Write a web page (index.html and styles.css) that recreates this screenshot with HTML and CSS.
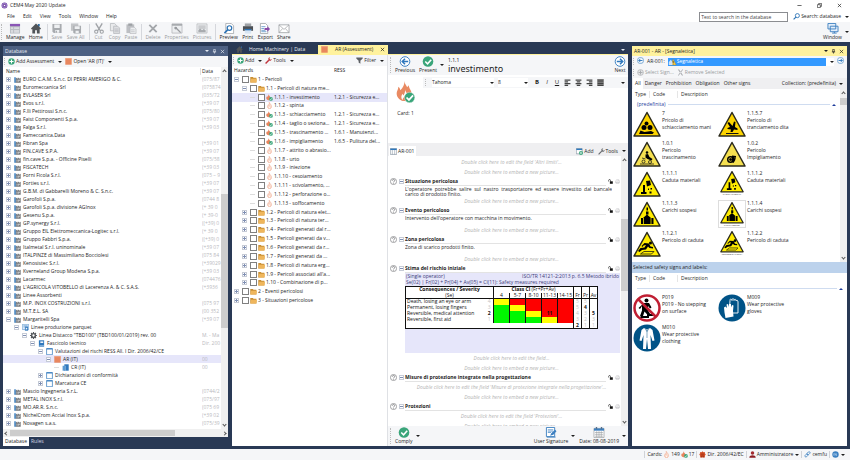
FILE: index.html
```html
<!DOCTYPE html>
<html lang="en">
<head>
    <meta charset="UTF-8">
    <meta name="viewport" content="width=device-width, initial-scale=1.0">
    <title>CEM4 May 2020 Update</title>
    <link rel="stylesheet" href="styles.css">
</head>
<body>
    <!-- Icon set -->
    <svg class="sprite" aria-hidden="true">
        <symbol id="i-app" viewBox="0 0 12 12"><circle cx="6" cy="6" r="5" fill="#6b3fa0"/><circle cx="6" cy="6" r="3.6" fill="none" stroke="#cbb8e6" stroke-width="1"/><circle cx="6" cy="6" r="1.4" fill="#fff"/></symbol>
        <symbol id="i-manage" viewBox="0 0 24 24"><path d="M1 2h22v21H1z" fill="#b9bcc2"/><path d="M1 2h22v5H1z" fill="#8a55b5"/><path d="M3 9h5v4H3zM10 9h11v4H10zM3 15h5v6H3zM10 15h11v6H10z" fill="#d9dbdf"/></symbol>
        <symbol id="i-home" viewBox="0 0 24 24"><path d="M12 1 1 12l2 2 1-1v10h6v-7h4v7h6V13l1 1 2-2-4-4V2h-3v3z" fill="#505458"/><path d="M17 2h3v6l-3-3z" fill="#2a72b5"/></symbol>
        <symbol id="i-save" viewBox="0 0 24 24"><path d="M2 2h20v20H5l-3-3z" fill="#a8abaf"/><path d="M6 3h12v8H6zM8 15h9v6H8z" fill="#eef0f2"/><path d="M9 17h3v4H9z" fill="#a8abaf"/></symbol>
        <symbol id="i-saveall" viewBox="0 0 24 24"><path d="M1 1h16v16H1z" fill="#c3c5c8"/><path d="M6 6h17v17H8l-2-2z" fill="#a8abaf"/><path d="M9 7h11v6H9zM11 17h7v5h-7z" fill="#eef0f2"/></symbol>
        <symbol id="i-cut" viewBox="0 0 24 24"><path d="M5 1l9 15M19 1l-9 15" stroke="#a0a3a7" stroke-width="3" fill="none"/><circle cx="6" cy="19" r="3.5" fill="none" stroke="#a0a3a7" stroke-width="2.4"/><circle cx="18" cy="19" r="3.5" fill="none" stroke="#a0a3a7" stroke-width="2.4"/></symbol>
        <symbol id="i-copy" viewBox="0 0 24 24"><path d="M2 1h9l4 4v12H2z" fill="#e9eaec" stroke="#b4b6ba" stroke-width="1.6"/><path d="M9 7h9l4 4v12H9z" fill="#dfe0e3" stroke="#b4b6ba" stroke-width="1.6"/><path d="M11 13h9M11 16h9M11 19h9" stroke="#b4b6ba" stroke-width="1.4"/></symbol>
        <symbol id="i-paste" viewBox="0 0 24 24"><path d="M2 3h17v19H2z" fill="#bdbfc3"/><path d="M6 1h9v5H6z" fill="#9da0a4"/><path d="M10 9h9l4 4v10H10z" fill="#eceef0" stroke="#b4b6ba" stroke-width="1.4"/><path d="M12 15h8M12 19h8" stroke="#b4b6ba" stroke-width="1.4"/></symbol>
        <symbol id="i-delete" viewBox="0 0 24 24"><path d="M4 4l16 16M20 4 4 20" stroke="#a3a6aa" stroke-width="4"/></symbol>
        <symbol id="i-properties" viewBox="0 0 24 24"><path d="M1 2h22v20H1z" fill="#eceef0" stroke="#b0b2b6" stroke-width="1.6"/><path d="M1 2h22v4H1z" fill="#a8abaf"/><path d="M9 10l11 11" stroke="#989b9f" stroke-width="3"/><circle cx="9" cy="11" r="3" fill="#989b9f"/></symbol>
        <symbol id="i-pictures" viewBox="0 0 24 24"><path d="M1 2h22v20H1z" fill="#eceef0" stroke="#b8babd" stroke-width="1.6"/><path d="M4 5h16v8H4z" fill="#c9cbce"/><path d="M4 20v-5l4-3 4 4 4-3 4 3v4z" fill="#a8abaf"/></symbol>
        <symbol id="i-preview" viewBox="0 0 24 24"><path d="M5 1h12l5 5v17H5z" fill="#fff" stroke="#8f9398" stroke-width="1.4"/><circle cx="13" cy="11" r="5" fill="#fff" stroke="#2a72b5" stroke-width="2.6"/><path d="M9 15l-7 7" stroke="#2a72b5" stroke-width="3.4"/></symbol>
        <symbol id="i-print" viewBox="0 0 24 24"><path d="M5 1h14v6H5z" fill="#9ea2a7"/><path d="M1 7h22v10H1z" fill="#4c5055"/><path d="M5 13h14v10H5z" fill="#d7e5f3"/><path d="M5 13h14v3H5z" fill="#2a72b5"/></symbol>
        <symbol id="i-export" viewBox="0 0 24 24"><path d="M2 1h11l5 5v17H2z" fill="#fff" stroke="#8f9398" stroke-width="1.5"/><path d="M4 8h9M4 12h6M4 16h9M4 19h11" stroke="#4b87c0" stroke-width="1.6"/><path d="M11 11h6V7l6 6-6 6v-4h-6z" fill="#8a4ba8"/></symbol>
        <symbol id="i-share" viewBox="0 0 24 24"><path d="M1 4h22v17H1z" fill="#fff" stroke="#96999d" stroke-width="1.6"/><path d="M1 4l11 10L23 4M1 21l8-9M23 21l-8-9" fill="none" stroke="#96999d" stroke-width="1.4"/></symbol>
        <symbol id="i-window" viewBox="0 0 24 24"><path d="M1 1h17v12H1zM6 7h17v12H6z" fill="#e3eefa" stroke="#3d7fc0" stroke-width="2"/><path d="M10 22h10M15 19v3" stroke="#3d7fc0" stroke-width="2"/></symbol>
        <symbol id="i-search" viewBox="0 0 24 24"><circle cx="15" cy="9" r="7" fill="none" stroke="#2a72b5" stroke-width="3"/><path d="M10 14l-8 8" stroke="#2a72b5" stroke-width="4"/></symbol>
        <symbol id="i-add" viewBox="0 0 24 24"><circle cx="12" cy="12" r="11" fill="#3aa57a"/><path d="M12 5v14M5 12h14" stroke="#fff" stroke-width="3.6"/></symbol>
        <symbol id="i-addgrey" viewBox="0 0 24 24"><circle cx="12" cy="12" r="10" fill="#e4e5e7" stroke="#a5a8ac" stroke-width="2"/><path d="M12 5v14M5 12h14" stroke="#a5a8ac" stroke-width="3"/></symbol>
        <symbol id="i-sheet" viewBox="0 0 24 24"><path d="M1 1h22v22H1z" fill="#e8875f"/><path d="M1 1h22v3H1z" fill="#f0a27f"/></symbol>
        <symbol id="i-factory" viewBox="0 0 24 24"><path d="M5 9l6-4v4l6-4v4l6-3v17H5z" fill="#77797c"/><path d="M9 13h3v3H9zM14 13h3v3h-3zM18 13h3v3h-3zM9 18h3v2H9zM14 18h3v2h-3z" fill="#e8e8e8"/><path d="M1 4h5v19H1z" fill="#3b7fc0"/></symbol>
        <symbol id="i-line" viewBox="0 0 24 24"><path d="M1 1h22v18H1z" fill="#dceafa" stroke="#5a94ca" stroke-width="2"/><path d="M5 6h14M5 10h14" stroke="#5a94ca" stroke-width="2"/><path d="M10 9h11v14H10z" fill="#3b7fc0"/><path d="M13 12l6 4-6 4z" fill="#fff"/></symbol>
        <symbol id="i-gear" viewBox="0 0 24 24"><circle cx="12" cy="12" r="6.5" fill="none" stroke="#56595d" stroke-width="5"/><path d="M12 0v5M12 19v5M0 12h5M19 12h5M3.5 3.5l4 4M16.500 16.500l4 4M20.500 3.500l-4 4M3.500 20.500l4-4" stroke="#56595d" stroke-width="4"/></symbol>
        <symbol id="i-book" viewBox="0 0 24 24"><path d="M3 1h18v22H3z" fill="#2f78bd"/><path d="M8 5h10v5H8z" fill="#fff"/><path d="M5 19h16v2H5z" fill="#d7e8f7"/></symbol>
        <symbol id="i-form" viewBox="0 0 24 24"><path d="M2 2h20v21H2z" fill="#fff" stroke="#3b7fc0" stroke-width="2.6"/><path d="M2 1h20v4H2z" fill="#3b7fc0"/></symbol>
        <symbol id="i-cr" viewBox="0 0 24 24"><path d="M8 1h15v22H8z" fill="#2f78bd"/><path d="M2 6h9v17H2z" fill="#5a9ad4"/><path d="M11 6h1v17h-1z" fill="#fff"/></symbol>
        <symbol id="i-folder" viewBox="0 0 24 24"><path d="M1 3h9l2 3h10v16H1z" fill="#c98f35"/><path d="M4 9h20l-2 13H1z" fill="#efb65c"/></symbol>
        <symbol id="i-flame" viewBox="0 0 24 24"><path d="M11 1c2 5 8 8 8 15 0 4-3 7-7 7s-7-3-7-7c0-3 2-5 3-7l2 3c2-4 1-7 1-11z" fill="#fbe3d8" stroke="#ee9a78" stroke-width="1.6"/><path d="M12 13c2 3 3 4 3 6s-1 3-3 3-3-1-3-3 2-3 3-6z" fill="#fff" stroke="#ee9a78" stroke-width="1"/></symbol>
        <symbol id="i-flameok" viewBox="0 0 24 24"><path d="M8 1c2 5 9 8 8 14-1 4-3 6-7 6s-8-2-8-7c0-3 2-5 3-7l2 3c2-3 2-5 2-9z" fill="#e8845c"/><circle cx="17" cy="17" r="6.500" fill="#3aa57a"/><path d="M13 17l3 3 5-6" fill="none" stroke="#fff" stroke-width="2"/></symbol>
        <symbol id="i-bigflame" viewBox="0 0 54 64"><path d="M24 0c0 8 5 12 8 18l4-6c1 7 4 10 7 17 4 10-1 25-14 30-3-1-7-2-10-1C6 54-1 43 2 31c2-5 4-8 4-14 4 3 5 6 6 10C20 19 24 11 24 0z" fill="#e98a62"/><path d="M26 24c0 8 8 12 8 21 0 7-5 12-10 12s-10-4-9-11c0-4 2-6 3-9l3 5c4-6 5-11 5-18z" fill="#fff"/><path d="M24 42c1 4 4 6 4 10s-2 6-5 6-5-3-4-6 5-5 5-10z" fill="#e98a62"/><circle cx="39" cy="48" r="15" fill="#3aa57a" stroke="#fff"/><path d="M30 48l7 7 12-13" fill="none" stroke="#fff" stroke-width="5"/></symbol>
        <symbol id="i-check" viewBox="0 0 24 24"><circle cx="12" cy="12" r="11.500" fill="#3aa57a"/><path d="M6 12l5 5 8-9" fill="none" stroke="#fff" stroke-width="3.4"/></symbol>
        <symbol id="i-prev" viewBox="0 0 24 24"><circle cx="12" cy="12" r="10.500" fill="#fff" stroke="#2f78bd" stroke-width="2"/><path d="M19 12H6M12 6l-6 6 6 6" fill="none" stroke="#2f78bd" stroke-width="3.2"/></symbol>
        <symbol id="i-next" viewBox="0 0 24 24"><circle cx="12" cy="12" r="10.500" fill="#fff" stroke="#2f78bd" stroke-width="2"/><path d="M5 12h13M12 6l6 6-6 6" fill="none" stroke="#2f78bd" stroke-width="3.2"/></symbol>
        <symbol id="i-wrench" viewBox="0 0 24 24"><path d="M2 22l11-11" stroke="#c0323a" stroke-width="5"/><path d="M11 8c0-4 3-7 7-7l-3 5 3 3 5-2c0 4-4 7-8 6z" fill="#c0323a"/></symbol>
        <symbol id="i-wrenchgrey" viewBox="0 0 24 24"><path d="M2 22l11-11" stroke="#66696d" stroke-width="4"/><path d="M11 8c0-4 3-7 7-7l-3 5 3 3 5-2c0 4-4 7-8 6z" fill="#66696d"/></symbol>
        <symbol id="i-filter" viewBox="0 0 24 24"><path d="M1 2h22v3l-8 8v10l-6-4v-6L1 5z" fill="#5d6064"/></symbol>
        <symbol id="i-table" viewBox="0 0 24 24"><path d="M1 2h22v20H1z" fill="#fff" stroke="#6f7f90" stroke-width="2"/><path d="M1 2h22v5H1z" fill="#2f78bd"/><path d="M8 7v15M16 7v15" stroke="#6f7f90" stroke-width="1.600"/></symbol>
        <symbol id="i-tableadd" viewBox="0 0 24 24"><path d="M1 2h20v18H1z" fill="#fff" stroke="#6f7f90" stroke-width="2"/><path d="M1 2h20v5H1z" fill="#2f78bd"/><circle cx="17" cy="17" r="7" fill="#3aa57a"/><path d="M17 13v8M13 17h8" stroke="#fff" stroke-width="2"/></symbol>
        <symbol id="i-help" viewBox="0 0 24 24"><circle cx="12" cy="12" r="10.500" fill="#fff" stroke="#88898c" stroke-width="2.600"/><path d="M8 9c0-5 8-5 8 0 0 3-4 3-4 6" fill="none" stroke="#77787b" stroke-width="2.800"/><circle cx="12" cy="18" r="1.700" fill="#77787b"/></symbol>
        <symbol id="i-lock" viewBox="0 0 24 24"><path d="M9 11h14v12H9z" fill="#111"/><path d="M3 12V7c0-6 9-6 9 0v5" fill="none" stroke="#111" stroke-width="3"/></symbol>
        <symbol id="i-printer" viewBox="0 0 24 24"><path d="M2 9h20v9H2zM6 3h12v6M6 15h12v6H6z" fill="#fff" stroke="#b4b4b8" stroke-width="2"/></symbol>
        <symbol id="i-sign" viewBox="0 0 24 24"><path d="M2 1h18v20H2z" fill="#fff" stroke="#3b7fc0" stroke-width="2"/><path d="M5 6h12M5 9h12M5 12h7" stroke="#3b7fc0" stroke-width="1.500"/><path d="M10 19l3-6 8-7 3 3-7 8z" fill="#3b7fc0"/><path d="M3 22h19" stroke="#3b7fc0" stroke-width="2"/></symbol>
        <symbol id="i-calendar" viewBox="0 0 24 24"><path d="M1 3h22v20H1z" fill="#fff" stroke="#9a9da1" stroke-width="1.500"/><path d="M1 3h22v5H1z" fill="#3b7fc0"/><path d="M5 0h3v5H5zM16 0h3v5h-3z" fill="#55718d"/><path d="M3 12h18M3 16h18M3 20h18M7 9v13M12 9v13M17 9v13" stroke="#9a9da1" stroke-width="1.300"/></symbol>
        <symbol id="i-warn" viewBox="0 0 24 24"><path d="M14 4l9 17H6z" fill="#f6c945" stroke="#a6791b"/><path d="M1 12l6-7 5 7v9H1z" fill="#cfe2f5"/><path d="M14 9v6M14 17v2" stroke="#222" stroke-width="2"/></symbol>
        <symbol id="i-eu" viewBox="0 0 24 24"><path d="M12 1l3 3 5-1v5l3 4-3 4v6H4v-6l-3-4 3-4V3l5 1z" fill="#cf4a22"/><path d="M7 11h10M8 22v-5h8v5" stroke="#8f2a10" stroke-width="2" fill="none"/></symbol>
        <symbol id="i-user" viewBox="0 0 24 24"><circle cx="12" cy="7" r="6" fill="#a32a2f"/><path d="M1 23c0-11 22-11 22 0z" fill="#8b1e25"/></symbol>
        <symbol id="i-link" viewBox="0 0 24 24"><rect x="2" y="12" width="12" height="7" rx="3.500" fill="none" stroke="#2f78bd" stroke-width="2.400" transform="rotate(-45 8 15)"/><rect x="10" y="4" width="12" height="7" rx="3.500" fill="none" stroke="#2f78bd" stroke-width="2.400" transform="rotate(-45 16 8)"/></symbol>
        <symbol id="i-lang" viewBox="0 0 24 24"><circle cx="12" cy="12" r="11" fill="#3b7fc0"/><path d="M6 8v8M10 16V8l5 8V8" fill="none" stroke="#bcd8f2" stroke-width="2"/></symbol>
        <symbol id="i-pin" viewBox="0 0 12 12"><path d="M4 1h4v6H4zM2 7h8M6 7v4" fill="none" stroke="currentColor" stroke-width="1.500"/></symbol>
        <symbol id="i-close" viewBox="0 0 12 12"><path d="M2 2l8 8M10 2l-8 8" stroke="currentColor" stroke-width="1.600"/></symbol>
        <symbol id="i-removegrey" viewBox="0 0 24 24"><path d="M3 2h4l14 20h-4zM21 2h-3L3 22h3z" fill="#a5a8ac"/></symbol>
        <symbol id="i-min" viewBox="0 0 12 12"><path d="M1 6h10" stroke="#222" stroke-width="1.600"/></symbol>
        <symbol id="i-restore" viewBox="0 0 12 12"><path d="M1 4h7v7H1zM4 4V1h7v7H8" fill="none" stroke="#222" stroke-width="1.500"/></symbol>

        <!-- Safety signs -->
        <symbol id="s-hands" viewBox="0 0 56 52"><path class="tri" d="M28 3 54 50H2z" fill="#fdd400"/><circle cx="27" cy="25" r="4"/><circle cx="22" cy="33" r="5"/><circle cx="34" cy="33" r="5"/><path d="M12 46l3-7 8 3 13-2 6 3-3 3z"/></symbol>
        <symbol id="s-cut" viewBox="0 0 56 52"><path class="tri" d="M28 3 54 50H2z" fill="#fdd400"/><path d="M19 24l3-2 7 8 3-9 3 1-1 10 5 3v3l-7-1-3 5h-4l1-5-7-1v-2l5-2z"/><path d="M16 45h25" stroke="#111" stroke-width="2"/></symbol>
        <symbol id="s-drag" viewBox="0 0 56 52"><path class="tri" d="M28 3 54 50H2z" fill="#f5e050"/><circle cx="28" cy="23" r="2.500"/><path d="M25 27l5-1 3 6 6 4-2 3-8-3-4-3z"/><circle cx="21" cy="41" r="3" fill="none" stroke="#111" stroke-width="1.500"/><circle cx="34" cy="42" r="3" fill="none" stroke="#111" stroke-width="1.500"/><path d="M14 46h28M18 34l7 2" stroke="#111" stroke-width="1.500"/></symbol>
        <symbol id="s-tangle" viewBox="0 0 56 52"><path class="tri" d="M28 3 54 50H2z" fill="#f5e050"/><circle cx="25" cy="37" r="7"/><circle cx="25" cy="37" r="3.500" fill="none" stroke="#f5e050" stroke-width="1.500"/><path d="M28 29l8 1v6l-5 8-4-3z"/><path d="M34 32l2 10" stroke="#f5e050"/></symbol>
        <symbol id="s-fall" viewBox="0 0 56 52"><path class="tri" d="M28 3 54 50H2z" fill="#ffec00"/><path d="M26 20l8-1 2 9-8 3zM20 28h4v14h-4zM16 42h11v4H16zM30 35h2v3h-2zM35 34h3v3h-3zM33 41h4v4h-4z"/></symbol>
        <symbol id="s-load" viewBox="0 0 56 52"><path class="tri" d="M28 3 54 50H2z" fill="#ffec00"/><path d="M27 13h3v6h-3zM26 21h5v6h-5zM28 27l8 7H20zM16 34h25v12H16z"/><path d="M21 34v12M36 34v12" stroke="#ffec00" stroke-width="1.500"/></symbol>
        <symbol id="s-trip" viewBox="0 0 56 52"><path class="tri" d="M28 3 54 50H2z" fill="#ffec00"/><circle cx="35" cy="24" r="3"/><path d="M23 24l9 1 3 6 5 1v3l-7-1-3-3-4 6-8 1-5 4-3-2 5-6 8-1 3-5-5 1-2 3-2-2z"/><path d="M22 41h20l-5 5H15z" fill="none" stroke="#111" stroke-width="1.500"/></symbol>
        <symbol id="s-nostep" viewBox="0 0 56 56"><circle cx="28" cy="28" r="25" fill="#fff" stroke="#c01f33" stroke-width="5"/><circle cx="27" cy="13" r="4"/><path d="M22 18h10l5 9-3 2-4-5v9l5 8-3 4-9-10-3 9h-6l4-11V24l-4 6-3-2zM15 44h13v-4h14v4H32v4H15z"/><path d="M11 11l34 34" stroke="#c01f33" stroke-width="5"/></symbol>
        <symbol id="s-gloves" viewBox="0 0 56 56"><circle cx="28" cy="28" r="27" fill="#005387"/><path d="M24 13c0-4 3-4 4 0 0-5 4-5 4 0 1-4 4-3 4 1 2-3 4-1 4 2v22H27l-4-8z" fill="#005387" stroke="#fff" stroke-width="1.800"/><path d="M12 27l3-2 3 3-1-7 3-1 2 6V20h4v7l2-5 3 1-1 11 1 11-16 3-2-11z" fill="#fff"/></symbol>
        <symbol id="s-suit" viewBox="0 0 56 56"><circle cx="28" cy="28" r="27" fill="#005387"/><path d="M22 8l6 3 6-3 5 4 4 21-4 1-4-12 1 28h-6l-2-20-2 20h-6l1-28-4 12-4-1 4-21z" fill="#fff"/><path d="M28 11v17M24 9l4 6 4-6" stroke="#005387" fill="none"/></symbol>
    </svg>

    <header class="titlebar">
        <svg class="ic"><use href="#i-app"/></svg>
        <h1>CEM4 May 2020 Update</h1>
        <div class="win-controls">
            <button aria-label="Minimize"><svg class="ic-s"><use href="#i-min"/></svg></button>
            <button aria-label="Restore"><svg class="ic-s"><use href="#i-restore"/></svg></button>
            <button aria-label="Close"><svg class="ic-s"><use href="#i-close"/></svg></button>
        </div>
    </header>

    <nav class="menubar">
        <button>File</button><button>Edit</button><button>View</button><button>Tools</button><button>Window</button><button>Help</button>
        <div class="search">
            <input type="text" placeholder="Text to search in the database" aria-label="Search text">
            <button class="tool dd"><svg class="ic"><use href="#i-search"/></svg>Search: database</button>
        </div>
    </nav>

    <div class="ribbon">
        <span class="grip"></span>
        <button class="big"><svg><use href="#i-manage"/></svg>Manage</button>
        <button class="big"><svg><use href="#i-home"/></svg>Home</button>
        <span class="sep"></span>
        <button class="big" disabled><svg><use href="#i-save"/></svg>Save</button>
        <button class="big" disabled><svg><use href="#i-saveall"/></svg>Save All</button>
        <span class="sep"></span>
        <button class="big" disabled><svg><use href="#i-cut"/></svg>Cut</button>
        <button class="big" disabled><svg><use href="#i-copy"/></svg>Copy</button>
        <button class="big" disabled><svg><use href="#i-paste"/></svg>Paste</button>
        <span class="sep"></span>
        <button class="big" disabled><svg><use href="#i-delete"/></svg>Delete</button>
        <button class="big" disabled><svg><use href="#i-properties"/></svg>Properties</button>
        <button class="big" disabled><svg><use href="#i-pictures"/></svg>Pictures</button>
        <span class="sep"></span>
        <button class="big"><svg><use href="#i-preview"/></svg>Preview</button>
        <button class="big"><svg><use href="#i-print"/></svg>Print</button>
        <button class="big"><svg><use href="#i-export"/></svg>Export</button>
        <button class="big"><svg><use href="#i-share"/></svg>Share</button>
        <div class="push dd"><button class="big"><svg><use href="#i-window"/></svg>Window</button></div>
    </div>

    <main class="workspace">
        <!-- Database tree -->
        <section class="panel database">
            <div class="panel-head">
                <h2>Database</h2>
                <span class="arrow"></span><svg class="ic-s"><use href="#i-pin"/></svg><svg class="ic-s"><use href="#i-close"/></svg>
            </div>
            <div class="tools">
                <span class="grip"></span>
                <button class="tool dd"><svg class="ic"><use href="#i-add"/></svg>Add Assessment</button>
                <button class="tool dd"><svg class="ic"><use href="#i-sheet"/></svg>Open 'AR (IT)'</button>
            </div>
            <div class="db-body">
                <div class="db-list">
                    <div class="db-row db-head"><span>Name</span><span class="col">Data</span></div>
                    <div id="db-tree"></div>
                </div>
                <div class="vscroll"><i class="up"></i><b class="thumb"></b><i class="down"></i></div>
            </div>
            <div class="hscroll"><i class="left"></i><b></b><i class="right"></i></div>
            <div class="bottom-tabs"><button class="active">Database</button><button>Rules</button></div>
        </section>

        <!-- Assessment document -->
        <section class="document">
            <div class="doc-tabs">
                <button class="doc-tab"><svg class="ic"><use href="#i-home"/></svg><span>Home Machinery | Data</span></button>
                <button class="doc-tab active"><svg class="ic"><use href="#i-sheet"/></svg><span>AR (Assessment)</span><svg class="ic-s"><use href="#i-close"/></svg></button>
                <span class="arrow push"></span>
            </div>
            <div class="doc-body">
                <div class="hazards">
                    <div class="tools">
                        <span class="grip"></span>
                        <button class="tool dd"><svg class="ic"><use href="#i-add"/></svg>Add</button>
                        <button class="tool dd"><svg class="ic"><use href="#i-wrench"/></svg>Tools</button>
                        <button class="tool dd push"><svg class="ic"><use href="#i-filter"/></svg>Filter</button>
                    </div>
                    <div class="hz-row hz-head"><span>Hazards</span><span>RESS</span></div>
                    <div id="hz-tree"></div>
                </div>

                <div class="card">
                    <div class="card-head">
                        <span class="grip"></span>
                        <button class="big"><svg><use href="#i-prev"/></svg>Previous</button>
                        <div class="dd"><button class="big"><svg><use href="#i-check"/></svg>Present</button></div>
                        <div class="card-title"><span>1.1.1</span><h2>investimento</h2></div>
                        <button class="big push"><svg><use href="#i-next"/></svg>Next</button>
                    </div>
                    <div class="card-edit">
                        <div class="card-thumb"><svg><use href="#i-bigflame"/></svg><span>Card: 1</span></div>
                        <div class="editor">
                            <div class="format">
                                <span class="grip"></span>
                                <div class="dd font-box"><select aria-label="Font"><option>Tahoma</option></select></div>
                                <div class="dd size-box"><select aria-label="Size"><option>8</option></select></div>
                                <button class="fmt"><b>B</b></button><button class="fmt"><i>I</i></button><button class="fmt"><u>U</u></button>
                                <button class="al" aria-label="Align left"><svg viewBox="0 0 12 12"><path d="M1 2h10M1 5h6M1 8h10M1 11h6"/></svg></button>
                                <button class="al" aria-label="Center"><svg viewBox="0 0 12 12"><path d="M1 2h10M3 5h6M1 8h10M3 11h6"/></svg></button>
                                <button class="al" aria-label="Align right"><svg viewBox="0 0 12 12"><path d="M1 2h10M5 5h6M1 8h10M5 11h6"/></svg></button>
                                <button class="al on" aria-label="Justify"><svg viewBox="0 0 12 12"><path d="M1 2h10M1 5h10M1 8h10M1 11h10"/></svg></button>
                                <span class="arrow push"></span>
                            </div>
                        </div>
                    </div>
                    <div class="card-tabs">
                        <button class="active"><svg class="ic"><use href="#i-table"/></svg>AR-001</button>
                        <button class="tool push"><svg class="ic"><use href="#i-tableadd"/></svg>Add</button>
                        <button class="tool dd"><svg class="ic"><use href="#i-wrenchgrey"/></svg>Tools</button>
                    </div>
                    <div class="fields-wrap">
                        <div class="fields">
                            <p class="hint">Double click here to edit the field 'Altri limiti'...</p>
                            <p class="hint">Double click here to embed a new picture...</p>
                            <div class="field-head"><svg class="ic"><use href="#i-help"/></svg><span class="tg minus"></span><h3>Situazione pericolosa</h3><svg class="ic-s"><use href="#i-lock"/></svg><svg class="ic-s"><use href="#i-printer"/></svg></div>
                            <p class="text">L'operatore potrebbe salire sul nastro trasportatore ed essere investito dal bancale carico di prodotto finito.</p>
                            <p class="hint">Double click here to embed a new picture...</p>
                            <div class="field-head"><svg class="ic"><use href="#i-help"/></svg><span class="tg minus"></span><h3>Evento pericoloso</h3><svg class="ic-s"><use href="#i-lock"/></svg><svg class="ic-s"><use href="#i-printer"/></svg></div>
                            <p class="text">Intervento dell'operatore con macchina in movimento.</p>
                            <p class="hint">Double click here to embed a new picture...</p>
                            <div class="field-head"><svg class="ic"><use href="#i-help"/></svg><span class="tg minus"></span><h3>Zona pericolosa</h3><svg class="ic-s"><use href="#i-lock"/></svg><svg class="ic-s"><use href="#i-printer"/></svg></div>
                            <p class="text">Zona di scarico prodotti finito.</p>
                            <p class="hint">Double click here to embed a new picture...</p>
                            <div class="field-head"><svg class="ic"><use href="#i-help"/></svg><span class="tg minus"></span><h3>Stima del rischio iniziale</h3><svg class="ic-s"><use href="#i-lock"/></svg><svg class="ic-s"><use href="#i-printer"/></svg></div>
                            <div class="risk">
                                <div class="risk-line"><span>(Single operator)</span><span>ISO/TR 14121-2:2013 p. 6.5 Metodo ibrido</span></div>
                                <div class="risk-line">Se(02) | Fr(02) + Pr(04) + Av(05) = Cl(11): Safety measures required</div>
                                <table>
                                    <colgroup><col class="c-name"><col class="c-small"><col span="5" class="c-class"><col span="3" class="c-small"></colgroup>
                                    <thead>
                                        <tr><th colspan="2">Consequences / Severity</th><th colspan="5">Class Cl <small>(Fr+Pr+Av)</small></th><th></th><th></th><th></th></tr>
                                        <tr><td colspan="2">(Se)</td><td>4</td><td>5-7</td><td>8-10</td><td>11-13</td><td>14-15</td><td>Fr</td><td>Pr</td><td>Av</td></tr>
                                    </thead>
                                    <tbody>
                                        <tr><td class="sev">Death, losing an eye or arm</td><td class="dim">4</td><td class="y"></td><td class="r"></td><td class="r"></td><td class="r"></td><td class="r"></td><td class="dim">5</td><td class="dim">5</td><td></td></tr>
                                        <tr><td class="sev">Permanent, losing fingers</td><td class="dim">3</td><td class="g"></td><td class="y"></td><td class="r"></td><td class="r"></td><td class="r"></td><td class="dim">5</td><td><b>4</b></td><td></td></tr>
                                        <tr><td class="sev">Reversible, medical attention</td><td><b>2</b></td><td class="g"></td><td class="g"></td><td class="y"></td><td class="r"><b>11</b></td><td class="r"></td><td class="dim">4</td><td class="dim">3</td><td><b>5</b></td></tr>
                                        <tr><td class="sev">Reversible, first aid</td><td class="dim">1</td><td class="g"></td><td class="g"></td><td class="g"></td><td class="y"></td><td class="r"></td><td class="dim">3</td><td class="dim">2</td><td class="dim">3</td></tr>
                                        <tr class="last"><td colspan="7"></td><td><b>2</b></td><td class="dim">1</td><td class="dim">1</td></tr>
                                    </tbody>
                                </table>
                            </div>
                            <p class="hint">Double click here to edit the field...</p>
                            <p class="hint">Double click here to embed a new picture...</p>
                            <div class="field-head"><svg class="ic"><use href="#i-help"/></svg><span class="tg minus"></span><h3>Misure di protezione integrate nella progettazione</h3><svg class="ic-s"><use href="#i-lock"/></svg><svg class="ic-s"><use href="#i-printer"/></svg></div>
                            <p class="hint">Double click here to edit the field 'Misure di protezione integrate nella progettazione'...</p>
                            <p class="hint">Double click here to embed a new picture...</p>
                            <div class="field-head"><svg class="ic"><use href="#i-help"/></svg><span class="tg minus"></span><h3>Protezioni</h3><svg class="ic-s"><use href="#i-lock"/></svg><svg class="ic-s"><use href="#i-printer"/></svg></div>
                            <p class="hint">Double click here to edit the field 'Protezioni'...</p>
                            <p class="hint">Double click here to embed a new picture...</p>
                        </div>
                        <div class="vscroll fields-scroll"><i class="up"></i><b class="thumb"></b><i class="down"></i></div>
                    </div>
                    <div class="card-foot">
                        <span class="grip"></span>
                        <div class="dd"><button class="big"><svg><use href="#i-check"/></svg>Comply</button></div>
                        <div class="dd push"><button class="big"><svg><use href="#i-sign"/></svg>User Signature</button></div>
                        <div class="dd"><button class="big"><svg><use href="#i-calendar"/></svg>Date: 08-08-2019</button></div>
                    </div>
                </div>
            </div>
        </section>

        <!-- Safety signs -->
        <section class="panel signs">
            <div class="panel-head yellow">
                <h2>AR-001 - AR - [Segnaletica]</h2>
                <span class="arrow"></span><svg class="ic-s"><use href="#i-pin"/></svg><svg class="ic-s"><use href="#i-close"/></svg>
            </div>
            <div class="tools">
                <span class="grip"></span>
                <button aria-label="Back"><svg class="ic"><use href="#i-prev"/></svg></button>
                <label for="field">AR-001:</label>
                <div class="combo dd"><svg class="ic"><use href="#i-warn"/></svg><select id="field"><option>Segnaletica</option></select></div>
                <button aria-label="Forward"><svg class="ic"><use href="#i-next"/></svg></button>
            </div>
            <div class="tools">
                <span class="grip"></span>
                <button class="tool" disabled><svg class="ic"><use href="#i-addgrey"/></svg>Select Sign...</button>
                <button class="tool" disabled><svg class="ic"><use href="#i-removegrey"/></svg>Remove Selected</button>
            </div>
            <div class="sign-tabs">
                <button class="active">All</button><button>Danger</button><button>Prohibition</button><button>Obligation</button><button>Other signs</button>
                <button class="dd push">Collection: (predefinita)</button>
            </div>
            <div class="sign-wrap">
                <div class="sign-list">
                    <div class="sign-cols"><span>Type</span><span>Code</span><span>Description</span></div>
                    <div class="group"><span>(predefinita)</span><hr><i></i></div>
                    <div class="sign-grid" id="all-signs"></div>
                </div>
                <div class="vscroll sign-scroll"><i class="up"></i><b class="thumb"></b><i class="down"></i></div>
            </div>
            <div class="selected-head">Selected safety signs and labels:</div>
            <div class="selected-list">
                <div class="sign-cols"><span>Type</span><span>Code</span><span>Description</span></div>
                <div class="group"><hr><i></i></div>
                <div class="sign-grid" id="picked-signs"></div>
            </div>
        </section>
    </main>

    <footer class="status">
        <span class="item">Cards: <svg class="ic"><use href="#i-flame"/></svg>149 <svg class="ic"><use href="#i-flameok"/></svg>17</span>
        <span class="item"><svg class="ic"><use href="#i-eu"/></svg>Dir. 2006/42/EC</span>
        <button class="item dd"><svg class="ic"><use href="#i-user"/></svg>Amministratore</button>
        <span class="item"><svg class="ic"><use href="#i-link"/></svg>cemfu</span>
        <button class="item dd" aria-label="Language"><svg class="ic"><use href="#i-lang"/></svg></button>
    </footer>

    <script src="script.js"></script>
</body>
</html>
```

FILE: styles.css
```css
* {
    box-sizing: border-box;
}
body {
    margin: 0;
    height: 100vh;
    display: flex;
    flex-direction: column;
    overflow: hidden;
    font-family: "Open Sans", "Noto Sans", sans-serif;
    font-size: 5px;
    line-height: 7px;
    color: #1e1e1e;
    background-color: #fff;
}
h1, h2, h3, p {
    margin: 0;
    font-size: inherit;
    font-weight: normal;
}
button, input, select {
    font: inherit;
    color: inherit;
    border: none;
    background: none;
    padding: 0;
    margin: 0;
    white-space: nowrap;
}
button:disabled {
    color: #9a9da1;
}
.sprite {
    position: absolute;
    width: 0;
    height: 0;
}
.ic {
    width: 7px;
    height: 7px;
    flex: none;
}
.ic-s {
    width: 5px;
    height: 5px;
    flex: none;
}
.push {
    margin-left: auto !important;
}

/* Little drop-down arrow after a control */
.dd {
    display: flex;
    align-items: center;
}
.dd::after, .arrow {
    content: "";
    flex: none;
    border: 2px solid transparent;
    border-top-color: currentColor;
    border-bottom: none;
    margin-left: 3px;
}
.grip {
    width: 1px;
    align-self: stretch;
    margin: 2px;
    border-left: 1px dotted #bbb;
    flex: none;
}
.sep {
    width: 1px;
    align-self: stretch;
    margin: 2px 0;
    background-color: #d5d7dc;
}

/* Window top */
.titlebar, .menubar {
    display: flex;
    align-items: center;
    height: 11px;
    flex: none;
}
.titlebar {
    padding: 0 8px 0 1px;
    gap: 2px;
}
.win-controls {
    margin-left: auto;
    display: flex;
    gap: 15px;
}
.win-controls button {
    display: flex;
}
.menubar {
    padding: 0 1px 0 7px;
    gap: 8px;
}
.search {
    margin-left: auto;
    display: flex;
    gap: 5px;
}
.search input {
    width: 89px;
    height: 10px;
    padding: 0 1px;
    border: 1px solid #8b8d91;
    background-color: #fff;
}
.search input::placeholder {
    color: #444;
}
.tool {
    display: flex;
    align-items: center;
    gap: 1px;
}
.ribbon {
    display: flex;
    align-items: center;
    gap: 4px;
    height: 20px;
    flex: none;
    padding: 0 1px;
    background-color: #f5f6f8;
}
.ribbon .grip {
    margin: 2px 0;
}
.ribbon .sep {
    margin: 2px -1px 2px 0;
}
.big {
    display: flex;
    flex-direction: column;
    align-items: center;
}
.big svg {
    width: 12px;
    height: 11px;
}

/* Workspace */
.workspace {
    flex: 1;
    min-height: 0;
    display: grid;
    grid-template-columns: minmax(0, 225fr) minmax(0, 396fr) minmax(0, 215fr);
    grid-template-rows: minmax(0, 1fr);
    gap: 4px;
    padding: 3px;
    background-color: #293955;
}
.panel, .document, .card, .hazards {
    display: flex;
    flex-direction: column;
    min-width: 0;
    min-height: 0;
}
.panel {
    margin-top: 1px;
}
.panel-head {
    display: flex;
    align-items: center;
    gap: 3px;
    height: 10px;
    flex: none;
    padding: 0 3px 0 2px;
    color: #e4e9f2;
    background-color: #4d6082;
}
.panel-head h2 {
    flex: 1;
}
.panel-head.yellow {
    color: #1e1e1e;
    background-color: #fff29d;
}
.tools {
    display: flex;
    align-items: center;
    gap: 3px;
    height: 11px;
    flex: none;
    padding-right: 3px;
    background-color: #f5f6f8;
}
.tools .grip {
    margin: 2px 0 2px 1px;
}

/* Scroll bars */
.vscroll {
    width: 7px;
    flex: none;
    display: flex;
    flex-direction: column;
    align-items: center;
    background-color: #f0f0f0;
}
.vscroll i, .hscroll i {
    width: 3px;
    height: 3px;
    margin: 3px 2px;
    border: 1px solid #555;
    border-right: none;
    border-bottom: none;
    flex: none;
}
.vscroll .up {
    transform: rotate(45deg);
}
.vscroll .down {
    margin-top: auto;
    transform: rotate(225deg);
}
.thumb {
    width: 100%;
    height: 37%;
    margin-top: 118px;
    background-color: #cdcdcd;
}
.hscroll {
    display: flex;
    align-items: center;
    height: 8px;
    flex: none;
    background-color: #f0f0f0;
}
.hscroll b {
    width: 165px;
    height: 6px;
    background-color: #cdcdcd;
}
.hscroll .left {
    transform: rotate(-45deg);
}
.hscroll .right {
    margin-left: auto;
    transform: rotate(135deg);
}

/* Database tree */
.db-body {
    flex: 1;
    min-height: 0;
    display: flex;
    background-color: #fff;
}
.db-list {
    flex: 1;
    min-width: 0;
    overflow: hidden;
}
.db-row {
    display: flex;
    align-items: center;
    height: 8px;
    padding-left: 3px;
    white-space: nowrap;
}
.db-row .name {
    display: flex;
    align-items: center;
    gap: 2px;
}
.db-row .col {
    margin-left: auto;
    width: 19px;
    overflow: hidden;
    color: #b9b9bd;
}
.db-row .ic {
    margin-left: 1px;
}
.db-head .col {
    color: inherit;
    width: 21px;
    border-left: 1px solid #ddd;
    padding-left: 1px;
}
.selected {
    background-color: #e6e6fa;
}
.tg {
    position: relative;
    width: 5px;
    height: 5px;
    border: 1px solid #c6cbd6;
    background-color: #fff;
    flex: none;
}
.tg::before, .tg.plus::after {
    content: "";
    position: absolute;
    top: 1px;
    left: 0;
    width: 3px;
    height: 1px;
    background-color: #7f8fb3;
}
.tg.plus::after {
    transform: rotate(90deg);
}
.tg.none {
    border: none;
    background: none;
}
.tg.none::before {
    top: 2px;
    background-color: #ddd;
    width: 5px;
}
.bottom-tabs {
    display: flex;
    height: 9px;
    flex: none;
    color: #d5dbe6;
    background-color: #293955;
}
.bottom-tabs button {
    padding: 0 2px;
}
.bottom-tabs .active {
    color: #1e1e1e;
    background-color: #fff;
}

/* Document */
.doc-tabs {
    display: flex;
    align-items: center;
    height: 10px;
    flex: none;
    padding-right: 3px;
    color: #e4e9f2;
    border-bottom: 1px solid #fff29d;
}
.doc-tab {
    display: flex;
    align-items: center;
    justify-content: space-between;
    height: 9px;
    padding: 0 13px 0 4px;
    gap: 6px;
}
.doc-tab.active {
    width: 70px;
    padding: 0 3px;
    color: #1e1e1e;
    background-color: #fff29d;
}
.doc-body {
    flex: 1;
    min-height: 0;
    display: grid;
    grid-template-columns: minmax(0, 155fr) minmax(0, 240fr);
    grid-template-rows: minmax(0, 1fr);
    gap: 1px;
    background-color: #dfe1e5;
}
.hazards {
    background-color: #fff;
}
.hz-row {
    display: grid;
    grid-template-columns: minmax(0, 100fr) minmax(0, 53fr);
    align-items: center;
    padding-left: 2px;
    white-space: nowrap;
}
.hz-head {
    height: 9px;
}
#hz-tree {
    display: grid;
    grid-auto-rows: 1fr;
    height: 230px;
}
.hz-row label {
    display: flex;
    align-items: center;
    gap: 1px;
}
.hz-row input {
    appearance: none;
    width: 7px;
    height: 7px;
    margin-left: 2px;
    border: 1px solid #808080;
    background-color: #fff;
}
.card {
    background-color: #fff;
}
.card-head, .card-foot {
    display: flex;
    align-items: center;
    gap: 4px;
    height: 20px;
    flex: none;
    padding-right: 2px;
    background-color: #f5f6f8;
}
.card-head .grip, .card-foot .grip {
    margin: 2px 0 2px 2px;
}
.card-title {
    font-family: "Noto Sans", sans-serif;
}
.card-title span {
    display: block;
}
.card-title h2 {
    font-size: 9px;
    line-height: 10px;
}
.card-edit {
    display: flex;
    height: 68px;
    flex: none;
}
.card-thumb {
    display: flex;
    flex-direction: column;
    align-items: center;
    gap: 7px;
    width: 35px;
    padding-top: 6px;
}
.card-thumb svg {
    width: 19px;
    height: 22px;
}
.editor {
    flex: 1;
    padding-top: 2px;
}
.format {
    display: flex;
    align-items: center;
    gap: 4px;
    height: 11px;
    padding-right: 3px;
    background-color: #f5f6f8;
}
.format select, .combo select {
    flex: 1;
    appearance: none;
    min-width: 0;
}
.format .dd {
    background-color: #fff;
    height: 9px;
}
.font-box {
    width: 62px;
}
.size-box {
    width: 30px;
    margin-right: 2px;
}
.fmt {
    width: 6px;
    font-size: 6px;
}
.al {
    display: flex;
}
.al svg {
    width: 7px;
    height: 7px;
    stroke: #444;
    stroke-width: 2;
}
.al.on {
    background-color: #aaa;
}
.card-tabs {
    display: flex;
    align-items: flex-end;
    gap: 4px;
    height: 13px;
    flex: none;
    padding: 0 2px 0 1px;
    background-color: #efeff1;
}
.card-tabs button {
    display: flex;
    align-items: center;
    gap: 1px;
    height: 10px;
}
.card-tabs .active {
    padding: 0 2px 0 1px;
    background-color: #fff;
}

/* Card fields */
.fields-wrap {
    flex: 1;
    min-height: 0;
    display: flex;
}
.fields {
    flex: 1;
    min-width: 0;
    overflow: hidden;
    padding: 1px 1px 0 2px;
}
.hint {
    padding-left: 13px;
    height: 10px;
    line-height: 10px;
    text-align: center;
    font-style: italic;
    color: #b3b3b3;
    white-space: nowrap;
}
.field-head {
    display: flex;
    align-items: center;
    gap: 2px;
    height: 9px;
}
.field-head .tg {
    margin-right: -1px;
}
.field-head h3 {
    flex: 1;
    font-weight: bold;
    line-height: 8px;
    border-bottom: 1px solid #e3e3e3;
}
.text {
    height: 10px;
    overflow: hidden;
    margin: 0 8px 0 15px;
    line-height: 5px;
    padding-top: 1px;
    text-align: justify;
}
.risk {
    height: 80px;
    margin-left: 15px;
    background-color: #e6e6fa;
    color: #3c3c78;
}
.risk-line {
    display: flex;
    justify-content: space-between;
    line-height: 6px;
    padding: 0 1px;
    white-space: nowrap;
}
.risk table {
    width: 192px;
    margin-top: 1px;
    table-layout: fixed;
    border-collapse: collapse;
    line-height: 5px;
    color: #111;
    background-color: #fff;
    border: 1px solid #111;
}
.risk td, .risk th {
    height: 6px;
    padding: 0;
    text-align: center;
    border-left: 1px solid #111;
    white-space: nowrap;
}
.risk thead tr:last-child {
    border-bottom: 1px solid #111;
}
.risk small {
    font-size: 5px;
    font-weight: normal;
}
.risk .sev {
    padding-left: 1px;
    text-align: left;
}
.risk .sev + td {
    border-left: none;
}
.risk .dim {
    color: #c3c3c3;
}
.risk .r {
    background-color: #fe0000;
}
.risk .y {
    background-color: #ffff00;
}
.risk .g {
    background-color: #00f800;
}
.c-name {
    width: 80px;
}
.c-small {
    width: 8px;
}
.c-class {
    width: 16px;
}
.fields-scroll .thumb {
    height: 72px;
    margin-top: 54px;
}

/* Signs */
.signs {
    background-color: #fff;
}
.combo {
    flex: 1;
    gap: 1px;
    background-color: #fff;
}
.combo .ic {
    background-color: #3399ff;
    width: 9px;
    height: 8px;
    margin-right: -1px;
}
.combo select {
    height: 8px;
    color: #fff;
    background-color: #3399ff;
}
.sign-tabs {
    display: flex;
    height: 11px;
    flex: none;
    padding: 0 2px 0 1px;
    background-color: #efeff1;
}
.sign-tabs button {
    padding: 0 2px;
}
.sign-tabs .active {
    background-color: #fff;
}
.sign-wrap {
    display: flex;
    height: 173px;
    flex: none;
}
.sign-list {
    flex: 1;
    min-width: 0;
    overflow: hidden;
}
.sign-cols {
    display: flex;
    align-items: center;
    height: 11px;
}
.sign-cols span {
    width: 18px;
    padding-left: 3px;
    border-right: 1px solid #e5e5e5;
}
.sign-cols span:nth-child(2) {
    width: 28px;
}
.sign-cols span:last-child {
    width: auto;
    border: none;
}
.group {
    display: flex;
    align-items: center;
    gap: 2px;
    height: 9px;
    padding: 0 4px 0 5px;
    color: #1e3c9c;
}
.group hr {
    flex: 1;
    margin: 0;
    border: none;
    border-top: 1px solid #cfdcf0;
}
.group i {
    border: 2px solid transparent;
    border-bottom-color: #1e3c9c;
    border-top: none;
}
.sign-grid {
    display: grid;
    grid-template-columns: 85px 1fr;
    grid-auto-rows: 30px;
    padding: 1px 0 0 1px;
}
.sign {
    display: flex;
    gap: 1px;
    white-space: pre-line;
}
.sign svg {
    width: 28px;
    height: 28px;
    flex: none;
}
.tri {
    stroke: #2b2a1c;
    stroke-width: 3;
    stroke-linejoin: round;
}
.plate {
    display: flex;
    flex-direction: column;
    align-items: center;
    width: 28px;
    height: 28px;
    font-size: 2px;
    line-height: 3px;
    white-space: nowrap;
}
.sign .plate svg {
    width: 24px;
    height: 23px;
}
.plate.framed {
    border: 1px solid #ddd;
}
.sign-scroll .thumb {
    height: 7px;
    margin-top: 0;
}
.selected-head {
    height: 11px;
    line-height: 10px;
    flex: none;
    padding-left: 1px;
    background-color: #bcd2ec;
}

/* Status bar */
.status {
    display: flex;
    align-items: center;
    justify-content: flex-end;
    gap: 2px;
    height: 11px;
    flex: none;
    padding-right: 5px;
    background-color: #f5f6f8;
}
.item {
    display: flex;
    align-items: center;
    gap: 1px;
    padding-left: 2px;
    border-left: 1px solid #d0d2d7;
}
.item.dd::after {
    margin-left: 1px;
}
```

FILE: script.js
```js
// [level, toggle, icon, name, data]
const companies = [
    [0, 'plus', 'factory', 'EURO C.A.M. S.n.c. DI PERRI AMERIGO & C.', '(075/87'],
    [0, 'plus', 'factory', 'Euromeccanica Srl', '(075874'],
    [0, 'plus', 'factory', 'EVLASER Srl', '(035/72'],
    [0, 'plus', 'factory', 'Evos s.r.l.', '(+39 07'],
    [0, 'plus', 'factory', 'F.lli Pettirossi S.n.c.', '(075/80'],
    [0, 'plus', 'factory', 'Faist Componenti S.p.a.', '(+39 07'],
    [0, 'plus', 'factory', 'Falga S.r.l.', '(+39 03'],
    [0, 'plus', 'factory', 'Fameccanica.Data', ''],
    [0, 'plus', 'factory', 'Fibran Spa', '(+39 01'],
    [0, 'plus', 'factory', 'FIN.CAVE S.P.A.', '(+39 07'],
    [0, 'plus', 'factory', 'fin.cave S.p.a. - Officine Piselli', '(075/58'],
    [0, 'plus', 'factory', 'FISCATECH', '(+39 03'],
    [0, 'plus', 'factory', 'Forni Ficola S.r.l.', '(075 – 9'],
    [0, 'plus', 'factory', 'Forties s.r.l.', '(+39 07'],
    [0, 'plus', 'factory', 'G.B.M. di Gabbarelli Moreno & C. S.n.c.', '(+39 07'],
    [0, 'plus', 'factory', 'Garofoli S.p.a.', '(0744 8'],
    [0, 'plus', 'factory', 'Garofoli S.p.a. divisione AGInox', '(+ 39 0'],
    [0, 'plus', 'factory', 'Gesenu S.p.a.', '(+ 39-0'],
    [0, 'plus', 'factory', 'GP.synergy S.r.l.', '((+39) 0'],
    [0, 'plus', 'factory', 'Gruppo EIL Elettromeccanica-Logitec s.r.l.', '(+ 39 0'],
    [0, 'plus', 'factory', 'Gruppo Fabbri S.p.a.', '((+39) 0'],
    [0, 'plus', 'factory', 'Italmetal S.r.l. uninominale', '(+39 07'],
    [0, 'plus', 'factory', 'ITALPINZE di Massimiliano Bocciolesi', '(075 84'],
    [0, 'plus', 'factory', 'Kenosistec S.r.l.', '(+39029'],
    [0, 'plus', 'factory', 'Kverneland Group Modena S.p.a.', '(+39 03'],
    [0, 'plus', 'factory', 'Lacarmec', '(074476'],
    [0, 'plus', 'factory', "L'AGRICOLA VITOBELLO di Lacerenza A. & C. S.A.S.", '(+3936'],
    [0, 'plus', 'factory', 'Linee Assorbenti', ''],
    [0, 'plus', 'factory', 'M.P. INOX COSTRUZIONI s.r.l.', '(075 97'],
    [0, 'plus', 'factory', 'M.T.E.L. SA', '(00 352'],
    [0, 'minus', 'factory', 'Margaritelli Spa', '(+39 07'],
    [1, 'minus', 'line', 'Linee produzione parquet', ''],
    [2, 'minus', 'gear', 'Linea Distacco "TBD100" (TBD100/01/2019) rev. 00', 'M. - Ma'],
    [3, 'minus', 'book', 'Fascicolo tecnico', 'Dir. 200'],
    [4, 'minus', 'form', 'Valutazioni dei rischi RESS All. I Dir. 2006/42/CE', ''],
    [5, 'minus', 'sheet', 'AR (IT)', '00'],
    [6, 'none', 'cr', 'CR (IT)', '00'],
    [4, 'plus', 'form', 'Dichiarazioni di conformità', ''],
    [4, 'plus', 'form', 'Marcatura CE', ''],
    [0, 'plus', 'factory', 'Mascio Ingegneria S.r.L.', '(0744/2'],
    [0, 'plus', 'factory', 'METAL INOX S.r.l.', '(075/97'],
    [0, 'plus', 'factory', 'MO.AR.R. S.n.c.', '(075 69'],
    [0, 'plus', 'factory', 'NichelCrom Acciai Inox S.p.a.', '(+39 02'],
    [0, 'plus', 'factory', 'Novagen s.a.s.', '(075/39'],
    [0, 'plus', 'factory', 'Officina Meccanica Cicioni Giampaolo s.a.s.', '(+39 07']
];

// [level, toggle, icon, name, ress]
const hazards = [
    [0, 'minus', 'folder', '1 - Pericoli', ''],
    [1, 'minus', 'folder', '1.1 - Pericoli di natura me...', ''],
    [2, 'none', 'flameok', '1.1.1 - investimento', '1.2.1 - Sicurezza e...'],
    [2, 'none', 'flame', '1.1.2 - spinta', ''],
    [2, 'none', 'flameok', '1.1.3 - schiacciamento', '1.2.1 - Sicurezza e...'],
    [2, 'none', 'flameok', '1.1.4 - taglio o seziona...', '1.2.1 - Sicurezza e...'],
    [2, 'none', 'flameok', '1.1.5 - trascinamento ...', '1.6.1 - Manutenzi...'],
    [2, 'none', 'flameok', '1.1.6 - impigliamento', '1.6.5 - Pulitura del...'],
    [2, 'none', 'flame', '1.1.7 - attrito o abrasio...', ''],
    [2, 'none', 'flame', '1.1.8 - urto', ''],
    [2, 'none', 'flame', '1.1.9 - iniezione', ''],
    [2, 'none', 'flame', '1.1.10 - cesoiamento', ''],
    [2, 'none', 'flame', '1.1.11 - scivolamento, ...', ''],
    [2, 'none', 'flame', '1.1.12 - perforazione o...', ''],
    [2, 'none', 'flame', '1.1.13 - soffocamento', ''],
    [1, 'plus', 'folder', '1.2 - Pericoli di natura elet...', ''],
    [1, 'plus', 'folder', '1.3 - Pericoli di natura ter...', ''],
    [1, 'plus', 'folder', '1.4 - Pericoli generati dal r...', ''],
    [1, 'plus', 'folder', '1.5 - Pericoli generati da v...', ''],
    [1, 'plus', 'folder', '1.6 - Pericoli generati da r...', ''],
    [1, 'plus', 'folder', '1.7 - Pericoli generati da ...', ''],
    [1, 'plus', 'folder', '1.8 - Pericoli di natura erg...', ''],
    [1, 'plus', 'folder', "1.9 - Pericoli associati all'a...", ''],
    [1, 'plus', 'folder', '1.10 - Combinazione di p...', ''],
    [0, 'plus', 'folder', '2 - Eventi pericolosi', ''],
    [0, 'plus', 'folder', '3 - Situazioni pericolose', '']
];

// [sign, code, description, plate caption, framed]
const signs = [
    ['hands', '7', 'Pricolo di\nschiacciamento mani'],
    ['cut', '1.1.5.7', 'Pericolo di\ntranciamento dita'],
    ['drag', '1.0.1', 'Pericolo\ntrascinamento'],
    ['tangle', '1.0.2', 'Pericolo\nImpigliamento'],
    ['fall', '1.1.1.1', 'Caduta materiali'],
    ['fall', '1.1.1.2', 'Caduta materiali', 'CADUTA MATERIALI'],
    ['load', '1.1.1.3', 'Carichi sospesi'],
    ['load', '1.1.1.4', 'Carichi sospesi', 'CARICHI SOSPESI', true],
    ['trip', '1.1.2.1', 'Pericolo di caduta'],
    ['trip', '1.1.2.2', 'Pericolo di caduta', 'PERICOLO DI CADUTA']
];
const picked = [
    ['nostep', 'P019', 'P019 - No stepping\non surface'],
    ['gloves', 'M009', 'Wear protective\ngloves'],
    ['suit', 'M010', 'Wear protective\nclothing']
];

function icon(id) {
    return `<svg class="ic"><use href="#i-${id}"/></svg>`;
}

function signItem([id, code, text, caption, framed]) {
    let pic = `<svg><use href="#s-${id}"/></svg>`;
    if (caption) {
        pic = `<div class="plate ${framed ? 'framed' : ''}">${pic}${caption}</div>`;
    }
    return `<div class="sign">${pic}<span>${code}\n${text}</span></div>`;
}

document.getElementById('db-tree').innerHTML = companies.map(([level, toggle, ic, name, data]) =>
    `<div class="db-row ${name === 'AR (IT)' ? 'selected' : ''}">
        <span class="name" style="padding-left: ${level * 8}px"><span class="tg ${toggle}"></span>${icon(ic)}${name}</span>
        <span class="col">${data}</span>
    </div>`).join('');

document.getElementById('hz-tree').innerHTML = hazards.map(([level, toggle, ic, name, ress]) =>
    `<div class="hz-row ${name === '1.1.1 - investimento' ? 'selected' : ''}">
        <label style="padding-left: ${level * 8}px"><span class="tg ${toggle}"></span><input type="checkbox">${icon(ic)}${name}</label>
        <span>${ress}</span>
    </div>`).join('');

document.getElementById('all-signs').innerHTML = signs.map(signItem).join('');
document.getElementById('picked-signs').innerHTML = picked.map(signItem).join('');
```
